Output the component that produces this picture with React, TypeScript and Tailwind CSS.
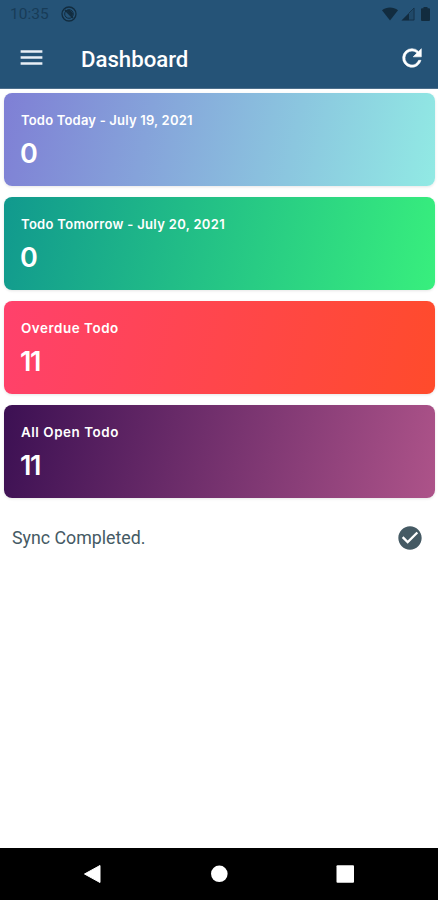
import { MdCheckCircle, MdMenu } from "react-icons/md";
import clsx from "clsx";

type TodoCard = {
  title: string;
  count: number;
  gradient: string;
  titleClass: string;
};

const cards: TodoCard[] = [
  {
    title: "Todo Today - July 19, 2021",
    count: 0,
    gradient: "bg-[linear-gradient(102deg,#7f7fd5,#91eae4)]",
    titleClass: "text-[13px] tracking-[0.19px]",
  },
  {
    title: "Todo Tomorrow - July 20, 2021",
    count: 0,
    gradient: "bg-[linear-gradient(102deg,#11998e,#38ef7d)]",
    titleClass: "text-[13px] tracking-[0.31px]",
  },
  {
    title: "Overdue Todo",
    count: 11,
    gradient: "bg-[linear-gradient(102deg,#ff416c,#ff4b2b)]",
    titleClass: "text-[13.4px] tracking-[0.55px]",
  },
  {
    title: "All Open Todo",
    count: 11,
    gradient: "bg-[linear-gradient(102deg,#3c1053,#ad5389)]",
    titleClass: "text-[13.4px] tracking-[0.55px]",
  },
];

const StatusBar = () => (
  <div className="flex h-7 items-center justify-between pl-[10px] pr-[7px] text-[#122c3f]">
    <div className="flex items-center gap-[12px]">
      <span className="mt-[2px] text-[15.5px] leading-none text-[#183c57]">
        10:35
      </span>
      <svg width="16" height="16" viewBox="0 0 16 16" fill="none">
        <circle cx="8" cy="8" r="7" stroke="currentColor" strokeWidth="1.3" />
        <circle cx="8" cy="8" r="4.3" stroke="currentColor" strokeWidth="1" />
        <path d="M5 4.2 8.6 3.6 12 7.2 11.4 11Z" fill="currentColor" />
        <path d="m4 4 8 8" stroke="currentColor" strokeWidth="1.4" />
      </svg>
    </div>
    <div className="flex items-center">
      <svg width="16" height="14" viewBox="0 0 16 14" fill="currentColor">
        <path d="M0 3.2C4.6-.3 11.4-.3 16 3.2L8 13.4Z" />
      </svg>
      <svg width="14" height="14" viewBox="0 0 14 14" className="ml-[3px]">
        <path d="M13.5.5V13.5H.5Z" fill="currentColor" fillOpacity="0.25" />
        <path d="M8 6v7.5H.5Z" fill="currentColor" />
        <path
          d="M8 6 13 1V13H8"
          fill="none"
          stroke="currentColor"
          strokeOpacity="0.7"
        />
      </svg>
      <svg
        width="9"
        height="14"
        viewBox="0 0 9 14"
        fill="currentColor"
        className="ml-[6px] mr-px"
      >
        <path d="M2.5 0h4v1.3H8q1 0 1 1V13q0 1-1 1H1q-1 0-1-1V2.3q0-1 1-1h1.5Z" />
      </svg>
    </div>
  </div>
);

const RefreshIcon = () => (
  <svg
    width="28"
    height="28"
    viewBox="0 0 24 24"
    fill="currentColor"
    stroke="currentColor"
    strokeWidth="0.5"
    className="ml-auto mt-[-1px]"
  >
    <path d="M17.65 6.35A7.96 7.96 0 0 0 12 4a8 8 0 1 0 7.73 10h-2.08A6 6 0 1 1 12 6c1.66 0 3.14.69 4.22 1.78L13 11h7V4z" />
  </svg>
);

const Header = () => (
  <header className="h-[89px] border-b border-[#4d6f8c] bg-[#255377]">
    <StatusBar />
    <div className="flex h-[61px] items-center pl-[17px] pr-3 text-white">
      <MdMenu size={29} className="mt-[-2px] text-[#e9eff6]" />
      <h1 className="ml-[35px] mt-[2px] text-[22.2px] font-medium leading-none">
        Dashboard
      </h1>
      <RefreshIcon />
    </div>
  </header>
);

const Card = ({ title, count, gradient, titleClass }: TodoCard) => (
  <div
    className={clsx(
      "h-[93px] rounded-lg pl-[17px] pt-[18px] font-['Inter',sans-serif] text-white shadow-[0_1px_3px_rgba(0,0,0,0.1)]",
      gradient,
    )}
  >
    <h2
      className={clsx(
        "whitespace-nowrap font-semibold leading-[18px]",
        titleClass,
      )}
    >
      {title}
    </h2>
    <p className="ml-[-1px] mt-2 text-[27px] font-semibold leading-[34px] tracking-[-1.5px]">
      {count}
    </p>
  </div>
);

const NavBar = () => (
  <nav className="h-[52px] bg-black">
    <svg width="438" height="52" viewBox="0 0 438 52" fill="white">
      <path d="M84.5 26 100 17.5V34.5Z" stroke="white" strokeLinejoin="round" />
      <circle cx="219.3" cy="25.8" r="8.3" />
      <rect x="336.5" y="17.3" width="17.5" height="17.5" rx="1" />
    </svg>
  </nav>
);

const App = () => {
  return (
    <div className="flex h-[900px] w-[438px] flex-col overflow-hidden bg-white font-['Roboto',sans-serif]">
      <Header />
      <main className="flex-1">
        <div className="flex flex-col gap-[11px] pl-1 pr-[3px] pt-1">
          {cards.map((card) => (
            <Card key={card.title} {...card} />
          ))}
        </div>
        <div className="mt-[25px] flex items-center justify-between pl-3 pr-[14px] text-[#455a64]">
          <span className="mt-px text-[17.8px] leading-7">
            Sync Completed.
          </span>
          <MdCheckCircle size={28} />
        </div>
      </main>
      <NavBar />
    </div>
  );
};

export default App;
